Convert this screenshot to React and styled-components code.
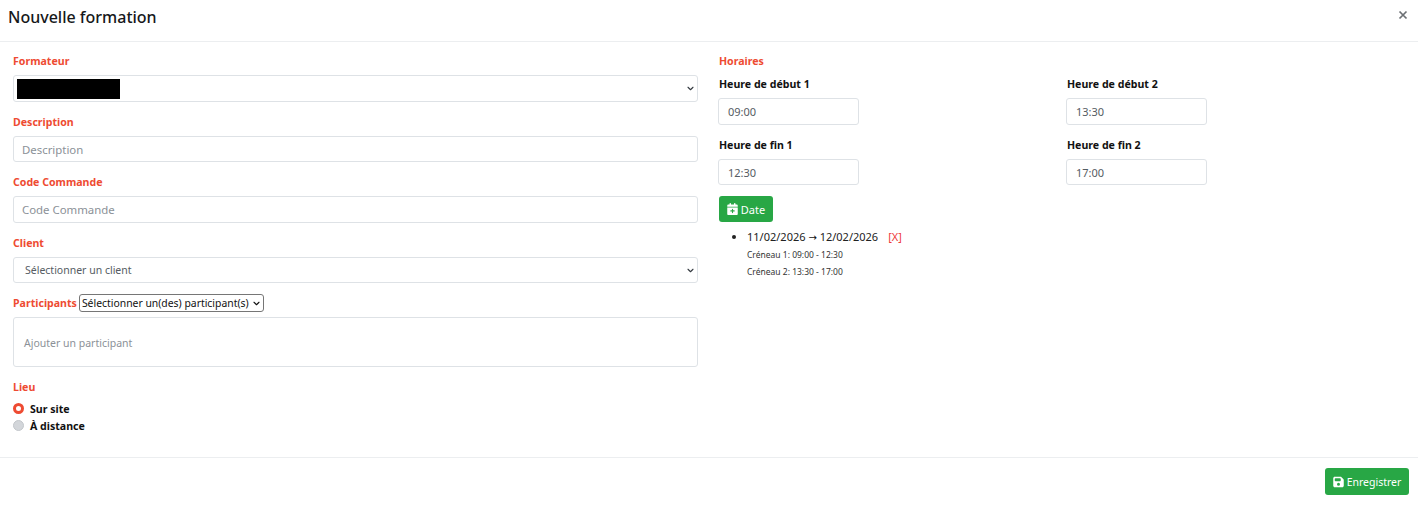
import React from "react";
import styled, { createGlobalStyle } from "styled-components";

const Global = createGlobalStyle`
  html, body { margin: 0; padding: 0; background: #fff; }
  body { font-family: "Noto Sans", "Open Sans", sans-serif; color: #111; }
  * { box-sizing: border-box; }
`;
const Modal = styled.div`
  width: 1418px; height: 505px; display: flex; flex-direction: column; overflow: hidden;
`;
const Header = styled.header`
  height: 42px; border-bottom: 1px solid #eceef0; padding: 0 8px;
  display: flex; justify-content: space-between; align-items: flex-start;
`;
const Title = styled.h1`
  margin: 7px 0 0; font-size: 16px; line-height: 21px; font-weight: 500; color: #16181a;
`;
const Close = styled.button`
  border: 0; background: none; padding: 0; margin: 9px 1px 0 0; width: 12px; height: 12px; color: #6c7074; display: flex;
`;
const Body = styled.div`
  height: 415px; padding: 10px 4px 0 13px; display: grid; grid-template-columns: 685px 695px; column-gap: 21px;
`;
const Column = styled.div`display: flex; flex-direction: column;`;
const Group = styled.div`margin-bottom: ${p => p.$mb ?? 11}px;`;
const Label = styled.label`
  display: block; height: 18px; line-height: 18px; margin-bottom: ${p => p.$mb ?? 5}px;
  font-size: 10.6px; font-weight: 700; color: ${p => (p.$black ? "#111" : "#ee4b32")};
`;
const Control = styled.div`
  height: ${p => p.$h ?? 26.5}px; width: ${p => p.$w ? `${p.$w}px` : "100%"};
  border: 1px solid #dee2e6; border-radius: 3px; background: #fff; position: relative;
  display: flex; align-items: center; padding: 0 ${p => p.$pad ?? 8}px;
  font-size: 11px; color: #5f666d;
`;
const Placeholder = styled.span`
  color: #8b9197; font-size: ${p => p.$size ?? 10.5}px; padding-top: 1px;
`;
const Value = styled.span`color: #555c63; font-size: ${p => p.$size ?? 10.5}px; padding-top: 1px;`;
const Chevron = styled.svg`
  position: absolute; right: ${p => p.$right ?? 3}px; top: 50%; margin-top: -2px; width: 7px; height: 5px;
`;
const Redacted = styled.div`position: absolute; left: 3px; top: 3px; width: 103px; height: 20px; background: #000;`;
const InlineRow = styled.div`display: flex; align-items: center; height: 18px; margin-bottom: 5px; gap: 2px;`;
const InlineLabel = styled(Label)`margin: 0;`;
const NativeLook = styled.div`
  width: 185px; height: 18px; border: 1px solid #767676; border-radius: 3px; display: flex; align-items: center;
  padding-left: 2px; font-size: 10.4px; color: #111; position: relative; white-space: nowrap;
`;
const RadioRow = styled.div`
  display: flex; align-items: center; gap: 6px; height: 17px; font-size: 10.6px; font-weight: 700; color: #111;
  position: relative; top: -1px;
`;
const Radio = styled.span`
  width: 11px; height: 11px; border-radius: 50%; flex: none;
  ${p => p.$on ? "background: #fff; border: 3px solid #ee4b32;" : "background: #d3d6da; border: 1px solid #c3c7cb;"}
`;
const TimeGrid = styled.div`display: grid; grid-template-columns: 348px 1fr;`;
const TimeCell = styled.div`margin-bottom: 11px;`;
const TimeControl = styled(Control)`margin-left: -1px;`;
const DateButton = styled.button`
  align-self: flex-start; height: 26px; width: 54px; background: #28a745; border: 0; border-radius: 3px; color: #fff;
  font: 400 11px "Noto Sans", sans-serif; display: flex; align-items: center; justify-content: center; gap: 3px; padding: 0;
`;
const DateList = styled.ul`margin: 6px 0 0; padding-left: 28px; font-size: 11px; color: #222;`;
const DateItem = styled.li`line-height: 17px;`;
const RangeArrow = styled.span`font-family: "DejaVu Sans", sans-serif; font-size: 10px; color: #111;`;
const Remove = styled.span`color: #ee3b3b; margin-left: 10px;`;
const Slot = styled.div`font-size: 8.5px; line-height: 17px; color: #333;`;
const Footer = styled.footer`
  border-top: 1px solid #eceef0; flex: 1; display: flex; justify-content: flex-end; padding: 10px 9px 0 0; align-items: flex-start;
`;
const SaveButton = styled(DateButton)`width: 84px; height: 27px; font-size: 10.5px;`;

const Arrow = ({ color = "#343a40", right }) => (
  <Chevron $right={right} viewBox="0 0 16 12"><path d="M2 3l6 6 6-6" fill="none" stroke={color} strokeWidth="2.6" strokeLinecap="round" strokeLinejoin="round" /></Chevron>
);
const CalendarPlus = () => (
  <svg width="11" height="12" viewBox="0 0 448 512" fill="#fff"><path d="M128 0c17.7 0 32 14.3 32 32V64H288V32c0-17.7 14.3-32 32-32s32 14.3 32 32V64h48c26.5 0 48 21.5 48 48v48H0V112C0 85.500 21.500 64 48 64H96V32c0-17.700 14.300-32 32-32zM0 192H448V464c0 26.500-21.500 48-48 48H48c-26.500 0-48-21.500-48-48V192zm224 48c-13.300 0-24 10.700-24 24v48H152c-13.300 0-24 10.700-24 24s10.700 24 24 24h48v48c0 13.300 10.700 24 24 24s24-10.700 24-24V360h48c13.300 0 24-10.700 24-24s-10.700-24-24-24H248V264c0-13.300-10.700-24-24-24z"/></svg>
);
const Floppy = () => (
  <svg width="11" height="12" viewBox="0 0 448 512" fill="#fff"><path d="M64 32C28.700 32 0 60.700 0 96V416c0 35.300 28.700 64 64 64H384c35.300 0 64-28.700 64-64V173.300c0-17-6.700-33.300-18.700-45.300L352 50.700C340 38.700 323.700 32 306.700 32H64zm0 96c0-17.700 14.300-32 32-32H288c17.700 0 32 14.300 32 32v64c0 17.700-14.300 32-32 32H96c-17.700 0-32-14.300-32-32V128zM224 288a64 64 0 1 1 0 128 64 64 0 1 1 0-128z"/></svg>
);

const TimeField = ({ label, value }) => (
  <TimeCell>
    <Label $black>{label}</Label>
    <TimeControl $w={141} $pad={9}><Value $size={11}>{value}</Value></TimeControl>
  </TimeCell>
);

export default function App() {
  return (
    <Modal>
      <Global />
      <Header>
        <Title>Nouvelle formation</Title>
        <Close aria-label="Fermer">
          <svg viewBox="0 0 12 12" width="12" height="12"><path d="M2.500 2.500l7 7M9.500 2.500l-7 7" stroke="currentColor" strokeWidth="1.700" /></svg>
        </Close>
      </Header>
      <Body>
        <Column>
          <Group>
            <Label>Formateur</Label>
            <Control><Redacted /><Arrow /></Control>
          </Group>
          <Group>
            <Label>Description</Label>
            <Control><Placeholder $size={11.4}>Description</Placeholder></Control>
          </Group>
          <Group>
            <Label>Code Commande</Label>
            <Control><Placeholder $size={11.4}>Code Commande</Placeholder></Control>
          </Group>
          <Group>
            <Label>Client</Label>
            <Control $pad={11}><Value>Sélectionner un client</Value><Arrow /></Control>
          </Group>
          <Group>
            <InlineRow>
              <InlineLabel>Participants</InlineLabel>
              <NativeLook>Sélectionner un(des) participant(s)<Arrow color="#111" /></NativeLook>
            </InlineRow>
            <Control $h={50} $pad={10}><Placeholder>Ajouter un participant</Placeholder></Control>
          </Group>
          <Label>Lieu</Label>
          <RadioRow><Radio $on />Sur site</RadioRow>
          <RadioRow><Radio />À distance</RadioRow>
        </Column>
        <Column>
          <Label as="div">Horaires</Label>
          <TimeGrid>
            <TimeField label="Heure de début 1" value="09:00" />
            <TimeField label="Heure de début 2" value="13:30" />
            <TimeField label="Heure de fin 1" value="12:30" />
            <TimeField label="Heure de fin 2" value="17:00" />
          </TimeGrid>
          <DateButton><CalendarPlus />Date</DateButton>
          <DateList>
            <DateItem>
              11/02/2026 <RangeArrow>→</RangeArrow> 12/02/2026<Remove>[X]</Remove>
              <Slot>Créneau 1: 09:00 - 12:30</Slot>
              <Slot>Créneau 2: 13:30 - 17:00</Slot>
            </DateItem>
          </DateList>
        </Column>
      </Body>
      <Footer>
        <SaveButton><Floppy />Enregistrer</SaveButton>
      </Footer>
    </Modal>
  );
}
